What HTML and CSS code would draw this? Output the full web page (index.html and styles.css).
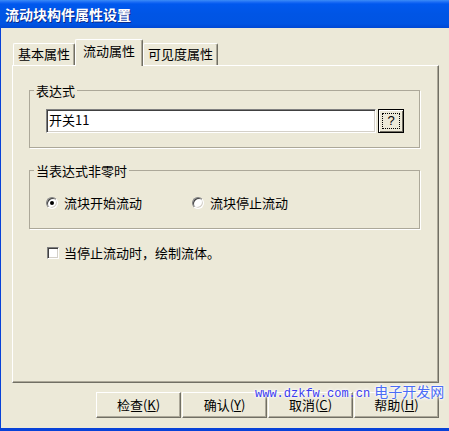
FILE: index.html
```html
<!DOCTYPE html>
<html lang="zh-CN">
<head>
  <meta charset="UTF-8" />
  <title>流动块构件属性设置</title>
  <link rel="stylesheet" href="styles.css">
</head>
<body>
  <div class="window">
    <div class="titlebar">流动块构件属性设置</div>

    <div class="client">
      <!-- Tabs -->
      <div class="tabs">
        <div class="tab tab-basic">基本属性</div>
        <div class="tab tab-flow active">流动属性</div>
        <div class="tab tab-visible">可见度属性</div>
      </div>

      <div class="panel">
        <fieldset class="group group-expr">
          <legend>表达式</legend>
          <div class="expr-row">
            <div class="textbox">开关11</div>
            <div class="qbtn"><span>?</span></div>
          </div>
        </fieldset>

        <fieldset class="group group-nonzero">
          <legend>当表达式非零时</legend>
          <div class="radio-row">
            <div class="opt"><span class="radio checked"></span>流块开始流动</div>
            <div class="opt"><span class="radio"></span>流块停止流动</div>
          </div>
        </fieldset>

        <div class="check-row">
          <span class="checkbox"></span>当停止流动时，绘制流体。
        </div>
      </div>

      <div class="buttons">
        <div class="btn">检查(<u>K</u>)</div>
        <div class="btn">确认(<u>Y</u>)</div>
        <div class="btn">取消(<u>C</u>)</div>
        <div class="btn">帮助(<u>H</u>)</div>
      </div>
    </div>

    <!-- site watermark -->
    <div class="watermark"><span class="wm-url">www.dzkfw.com.cn</span><span class="wm-name">电子开发网</span></div>
  </div>
</body>
</html>
```

FILE: styles.css
```css
body {
  margin: 0;
  font-family: "Noto Sans CJK SC", "DejaVu Sans", sans-serif;
  font-size: 13px;
  color: #000;
  background: #ece9d8;
}
.window {
  width: 449px;
  height: 431px;
  display: flex;
  flex-direction: column;
  background: #ece9d8;
  position: relative;
  overflow: hidden;
}
.titlebar {
  height: 28px;
  line-height: 28px;
  padding-left: 5px;
  color: #fff;
  font-weight: bold;
  font-size: 14px;
  text-shadow: 1px 1px #0b2a8c;
  background: linear-gradient(#3b8cf7 0, #1c6df5 2px, #0058ee 4px, #0055e5 50%, #0054e3 85%, #0048d4 100%);
}
.client {
  flex: 1;
  border-left: 1px solid #0842d8;
  border-bottom: 3px solid #0842d8;
  padding: 11px 10px 0 11px;
}

/* Tabs */
.tabs {
  display: flex;
  align-items: flex-end;
  height: 26px;
  padding-left: 1px;
  position: relative;
  z-index: 1;
}
.tab {
  box-sizing: border-box;
  height: 22px;
  line-height: 20px;
  text-align: center;
  background: #ece9d8;
  border-top: 1px solid #fff;
  border-left: 1px solid #fff;
  border-right: 1px solid #716f64;
  box-shadow: inset -1px 0 #aca899;
  border-radius: 2px 2px 0 0;
}
.tab-basic { width: 62px; }
.tab-flow { width: 68px; }
.tab-visible { width: 75px; }
.tab.active {
  height: 27px;
  line-height: 22px;
  margin-bottom: -1px;
}

/* Panel */
.panel {
  box-sizing: border-box;
  height: 318px;
  padding: 17px 0 0 16px;
  border-top: 1px solid #fff;
  border-left: 1px solid #fff;
  border-right: 1px solid #716f64;
  border-bottom: 1px solid #716f64;
  box-shadow: inset -1px -1px #aca899;
}
.group {
  box-sizing: border-box;
  width: 391px;
  margin: 0;
  padding: 0;
  border: 1px solid #aca899;
  box-shadow: 1px 1px #fff;
}
.group legend {
  margin-left: 4px;
  padding: 0 2px;
  line-height: 15px;
}
.expr-row {
  display: flex;
  gap: 2px;
  padding: 11px 0 14px 16px;
}
.textbox {
  box-sizing: border-box;
  width: 330px;
  height: 24px;
  line-height: 20px;
  padding-left: 2px;
  background: #fff;
  border-top: 1px solid #808080;
  border-left: 1px solid #808080;
  border-right: 1px solid #fff;
  border-bottom: 1px solid #fff;
  box-shadow: inset 1px 1px #404040, inset -1px -1px #d4d0c8;
}
.qbtn {
  box-sizing: border-box;
  width: 26px;
  height: 24px;
  border: 1px solid #000;
  background: #ece9d8;
  box-shadow: inset 1px 1px #fff, inset -1px -1px #716f64;
  padding: 3px;
}
.qbtn span {
  display: block;
  height: 100%;
  box-sizing: border-box;
  border: 1px dotted #000;
  text-align: center;
  line-height: 14px;
  font-family: "Liberation Sans", sans-serif;
  font-size: 13px;
}

.group-nonzero {
  margin-top: 15px;
}
.radio-row {
  display: flex;
  padding: 17px 0 18px 16px;
  line-height: 15px;
}
.opt {
  display: flex;
  align-items: center;
  gap: 6px;
  width: 146px;
}
.radio {
  box-sizing: border-box;
  width: 12px;
  height: 12px;
  border-radius: 50%;
  background: #fff;
  border: 1px solid;
  border-color: #808080 #fff #fff #808080;
  box-shadow: inset 1px 1px #404040, inset -1px -1px #d4d0c8;
  position: relative;
}
.radio.checked::after {
  content: '';
  position: absolute;
  left: 3px;
  top: 3px;
  width: 4px;
  height: 4px;
  border-radius: 50%;
  background: #000;
}

.check-row {
  display: flex;
  align-items: center;
  gap: 5px;
  margin: 16px 0 0 18px;
  line-height: 15px;
}
.checkbox {
  box-sizing: border-box;
  width: 12px;
  height: 12px;
  background: #fff;
  border: 1px solid;
  border-color: #808080 #fff #fff #808080;
  box-shadow: inset 1px 1px #404040, inset -1px -1px #d4d0c8;
}

/* Bottom buttons */
.buttons {
  display: flex;
  justify-content: flex-end;
  gap: 1px;
  margin-top: 9px;
}
.btn {
  box-sizing: border-box;
  width: 85px;
  height: 26px;
  line-height: 24px;
  text-align: center;
  background: #ece9d8;
  border-top: 1px solid #fff;
  border-left: 1px solid #fff;
  border-right: 1px solid #716f64;
  border-bottom: 1px solid #716f64;
  box-shadow: inset -1px -1px #aca899;
}
.btn u {
  text-decoration-thickness: 1px;
}

.watermark {
  position: absolute;
  left: 255px;
  top: 381px;
  display: flex;
  align-items: baseline;
  gap: 4px;
  white-space: nowrap;
  text-shadow: 0 0 2px #fff, 0 0 3px #fff, 0 0 4px #fff;
}
.wm-url {
  font-family: "Liberation Mono", monospace;
  font-size: 12px;
  color: #3a3af0;
}
.wm-name {
  font-size: 14px;
  color: #4a6cf5;
}
```
